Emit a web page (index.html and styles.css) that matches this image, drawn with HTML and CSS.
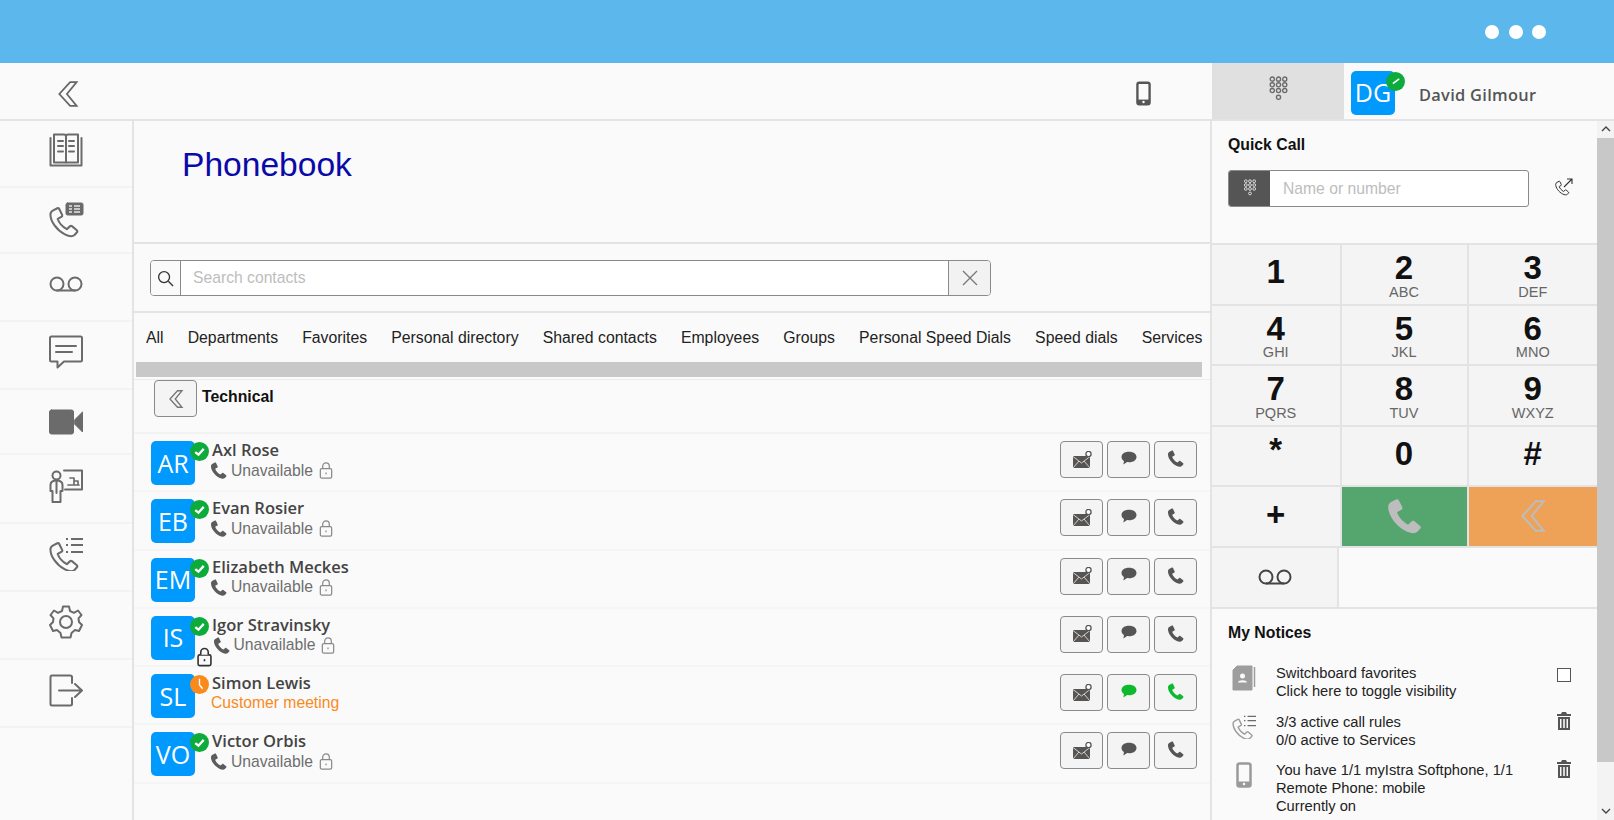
FILE: index.html
```html
<!DOCTYPE html>
<html lang="en">
<head>
<meta charset="utf-8">
<title>Phonebook</title>
<link rel="stylesheet" href="styles.css">
</head>
<body>
<svg class="defs" aria-hidden="true">
  <symbol id="handset" viewBox="0 0 24 24"><path d="M4.500 3.500 7.500 2C8 1.800 8.600 2 8.900 2.500L11 6.800C11.200 7.300 11.100 7.800 10.700 8.100L7.800 9.800C8.800 12.800 11.200 15.400 14.400 17.200L16.800 15C17.200 14.700 17.700 14.700 18.100 15L21.700 18C22.200 18.400 22.200 19 21.800 19.500L20 21.500C18.500 22.700 16 22.500 13 21 7 18 2.500 11.500 2.500 6.500 2.500 5.200 3.300 4.100 4.500 3.500Z"/></symbol>
  <symbol id="chevron" viewBox="0 0 24 24"><path d="M14 1 4 12 14 23H20L11 12 20 1Z"/></symbol>
  <symbol id="voicemail" viewBox="0 0 34 16"><circle cx="8" cy="8" r="6.500"/><circle cx="26" cy="8" r="6.500"/><path d="M8 14.500H26"/></symbol>
  <symbol id="lock" viewBox="0 0 14 18"><rect x="1" y="7" width="12" height="10" rx="1.500"/><path d="M3.500 7V4.500a3.500 3.500 0 0 1 7 0V7"/><path d="M7 11v2"/></symbol>
  <symbol id="mail" viewBox="0 0 20 18"><path class="fill" d="M1 5H18V17H1Z"/><path class="cut" d="M1 5.500 9.500 12 18 5.500M1 17 7 10M18 17 12 10"/><circle class="ring" cx="16.500" cy="3" r="2.600"/></symbol>
  <symbol id="chat" viewBox="0 0 24 20"><path d="M12 1C6 1 2 4 2 8c0 2.300 1.300 4.200 3.300 5.400L4.500 18l5-3.200c.8.100 1.600.200 2.500.200 6 0 10-3 10-7s-4-7-10-7Z"/></symbol>
  <symbol id="pad" viewBox="0 0 20 24"><g fill="none" stroke="currentColor" stroke-width="1.300"><circle cx="4" cy="3" r="2"/><circle cx="10" cy="3" r="2"/><circle cx="16" cy="3" r="2"/><circle cx="4" cy="8.500" r="2"/><circle cx="10" cy="8.500" r="2"/><circle cx="16" cy="8.500" r="2"/><circle cx="4" cy="14" r="2"/><circle cx="10" cy="14" r="2"/><circle cx="16" cy="14" r="2"/><circle cx="10" cy="20.500" r="2"/></g></symbol>
  <symbol id="device" viewBox="0 0 16 26"><rect x="1.500" y="1.500" width="13" height="23" rx="2" fill="none" stroke="currentColor" stroke-width="2.500"/><rect x="1.500" y="19.500" width="13" height="5" fill="currentColor"/><circle cx="8" cy="22" r="1.300" fill="#fafafa"/></symbol>
  <symbol id="trash" viewBox="0 0 14 18"><path fill="currentColor" d="M5 0h4l1 2h4v2H0V2h4ZM1 5h12v13H1Zm2 2v9h1.500V7Zm3.200 0v9h1.600V7Zm3.300 0v9H11V7Z" fill-rule="evenodd"/></symbol>
  <symbol id="calllist" viewBox="0 0 34 34"><use class="hs" href="#handset" x="-2" y="3.500" width="33" height="33"/><path class="lines" d="M17 2h2M22 2H34M17 8h2M22 8H34M17 15h2M22 15H34"/></symbol>
  <symbol id="tick" viewBox="0 0 18 18"><path d="M5 9.500 8 12 13 6.500" fill="none" stroke="#fff" stroke-width="2.200"/></symbol>
  <symbol id="tick-thin" viewBox="0 0 18 18"><path d="M6.500 11 12.500 6.500" fill="none" stroke="#fff" stroke-width="1.600"/></symbol>
</svg>

<div class="app">
  <div class="topbar">
    <span class="dot"></span><span class="dot"></span><span class="dot"></span>
  </div>

  <header class="header">
    <svg class="ico-out back-ico"><use href="#chevron"/></svg>
    <svg class="mobile-ico"><use href="#device"/></svg>
    <div class="pad-tab"><svg class="pad-ico"><use href="#pad"/></svg></div>
    <div class="me">
      <div class="avatar me-avatar">DG<svg class="badge me-badge"><use href="#tick-thin"/></svg></div>
      <span class="me-name">David Gilmour</span>
    </div>
  </header>

  <div class="body">
    <nav class="sidebar">
      <a class="nav-item first">
        <svg class="nav-ico" viewBox="0 0 34 34"><path d="M5 2V29.500H29V2"/><path d="M1.500 5V32.500H32.500V5"/><path d="M5 1.500H15C16 1.500 17 2.500 17 3.500V29.500M29 1.500H19C18 1.500 17 2.500 17 3.500"/><path d="M9 8h5M9 13h5M9 18.500h5M20 8h5M20 13h5M20 18.500h5" stroke-width="2"/></svg>
      </a>
      <a class="nav-item short">
        <svg class="nav-ico" viewBox="0 0 34 34"><use class="hs" href="#handset" x="-2" y="5.500" width="33" height="33"/><rect class="solid" x="17" y="3" width="17" height="12" rx="1.500"/><path class="paper" d="M20 6h3M20 9h3M20 12h3M25 6h6M25 9h6M25 12h6"/></svg>
      </a>
      <a class="nav-item">
        <svg class="nav-ico" viewBox="0 0 34 34"><circle cx="8" cy="17" r="6.500"/><circle cx="26" cy="17" r="6.500"/><path d="M8 23.500H26"/></svg>
      </a>
      <a class="nav-item">
        <svg class="nav-ico" viewBox="0 0 34 34"><path d="M2.500 1.500H31.500C32.300 1.500 33 2.200 33 3V25C33 25.800 32.300 26.500 31.500 26.500H15L8.500 32.500V26.500H2.500C1.700 26.500 1 25.800 1 25V3C1 2.200 1.700 1.500 2.500 1.500Z"/><path d="M7 11H27M7 17H23"/></svg>
      </a>
      <a class="nav-item short">
        <svg class="nav-ico" viewBox="0 0 34 34"><rect class="solid" x="0.500" y="8" width="24" height="24" rx="2"/><path class="solid" d="M25.500 18 33.500 10V30L25.500 22Z"/></svg>
      </a>
      <a class="nav-item">
        <svg class="nav-ico" viewBox="0 0 34 34"><circle cx="7.500" cy="6.500" r="4"/><path d="M1.500 22V16C1.500 13 4 11.500 7.500 11.500S13.500 13 13.500 16V22H11.500V33H3.500V22Z"/><path d="M7.500 11.500V24"/><path d="M15 1.500H33V20.500H16"/><path d="M19 16H30M21 9H25V16M25 12H29V16" stroke-width="1.700"/></svg>
      </a>
      <a class="nav-item">
        <svg class="nav-ico" viewBox="0 0 34 34"><use href="#calllist"/></svg>
      </a>
      <a class="nav-item">
        <svg class="nav-ico" viewBox="0 0 34 34"><circle cx="17" cy="17" r="6"/><path d="M14 1.500H20L21 6 25 7.800 29 5.500 32.500 10 29.500 13.300 30 17 33 20 30 26 26 25 22.500 28 21.500 32.500H12.500L11.500 28 8 25 4 26 1 20 4 17 4.500 13.300 1.500 10 5 5.500 9 7.800 13 6Z"/></svg>
      </a>
      <a class="nav-item">
        <svg class="nav-ico" viewBox="0 0 34 34"><path d="M23 9V3C23 2 22 1.500 21 1.500H3C2 1.500 1.500 2 1.500 3V30C1.500 31 2 31.500 3 31.500H21C22 31.500 23 31 23 30V24"/><path d="M10 16.500H32.500M26 10 33 16.500 26 23"/></svg>
      </a>
    </nav>

    <main class="main">
      <section class="title-sec"><h1 class="title">Phonebook</h1></section>

      <section class="search-sec">
        <div class="search">
          <span class="search-ico-cell">
            <svg class="search-ico" viewBox="0 0 18 18"><circle cx="7.500" cy="7.500" r="5.800"/><path d="M12 12 17 17"/></svg>
          </span>
          <span class="search-input">Search contacts</span>
          <span class="search-clear">
            <svg class="clear-ico" viewBox="0 0 16 16"><path d="M1 1 15 15M15 1 1 15"/></svg>
          </span>
        </div>
      </section>

      <div class="tabs">
        <span>All</span><span>Departments</span><span>Favorites</span><span>Personal directory</span><span>Shared contacts</span><span>Employees</span><span>Groups</span><span>Personal Speed Dials</span><span>Speed dials</span><span>Services</span>
      </div>
      <div class="hscroll"><div class="hthumb"></div></div>

      <div class="crumb">
        <button class="crumb-btn"><svg class="ico-out crumb-ico"><use href="#chevron"/></svg></button>
        <strong class="crumb-text">Technical</strong>
      </div>

      <div class="contact">
        <div class="avatar">AR<svg class="badge"><use href="#tick"/></svg></div>
        <div class="info"><div class="name">Axl Rose</div><div class="sub"><svg class="sub-phone"><use href="#handset"/></svg><span>Unavailable</span><svg class="sub-lock"><use href="#lock"/></svg></div></div>
        <div class="actions"><button class="act"><svg class="i-mail"><use href="#mail"/></svg></button><button class="act"><svg class="i-chat"><use href="#chat"/></svg></button><button class="act"><svg class="i-call"><use href="#handset"/></svg></button></div>
      </div>
      <div class="contact">
        <div class="avatar">EB<svg class="badge"><use href="#tick"/></svg></div>
        <div class="info"><div class="name">Evan Rosier</div><div class="sub"><svg class="sub-phone"><use href="#handset"/></svg><span>Unavailable</span><svg class="sub-lock"><use href="#lock"/></svg></div></div>
        <div class="actions"><button class="act"><svg class="i-mail"><use href="#mail"/></svg></button><button class="act"><svg class="i-chat"><use href="#chat"/></svg></button><button class="act"><svg class="i-call"><use href="#handset"/></svg></button></div>
      </div>
      <div class="contact">
        <div class="avatar">EM<svg class="badge"><use href="#tick"/></svg></div>
        <div class="info"><div class="name">Elizabeth Meckes</div><div class="sub"><svg class="sub-phone"><use href="#handset"/></svg><span>Unavailable</span><svg class="sub-lock"><use href="#lock"/></svg></div></div>
        <div class="actions"><button class="act"><svg class="i-mail"><use href="#mail"/></svg></button><button class="act"><svg class="i-chat"><use href="#chat"/></svg></button><button class="act"><svg class="i-call"><use href="#handset"/></svg></button></div>
      </div>
      <div class="contact">
        <div class="avatar">IS<svg class="badge"><use href="#tick"/></svg><svg class="dark-lock"><use href="#lock"/></svg></div>
        <div class="info"><div class="name">Igor Stravinsky</div><div class="sub shifted"><svg class="sub-phone"><use href="#handset"/></svg><span>Unavailable</span><svg class="sub-lock"><use href="#lock"/></svg></div></div>
        <div class="actions"><button class="act"><svg class="i-mail"><use href="#mail"/></svg></button><button class="act"><svg class="i-chat"><use href="#chat"/></svg></button><button class="act"><svg class="i-call"><use href="#handset"/></svg></button></div>
      </div>
      <div class="contact">
        <div class="avatar">SL<svg class="badge busy" viewBox="0 0 18 18"><path d="M9 3.500V9.500L12 13" fill="none" stroke="#fff" stroke-width="1.300"/></svg></div>
        <div class="info"><div class="name">Simon Lewis</div><div class="sub meeting"><span>Customer meeting</span></div></div>
        <div class="actions"><button class="act"><svg class="i-mail"><use href="#mail"/></svg></button><button class="act"><svg class="i-chat live"><use href="#chat"/></svg></button><button class="act"><svg class="i-call live"><use href="#handset"/></svg></button></div>
      </div>
      <div class="contact">
        <div class="avatar">VO<svg class="badge"><use href="#tick"/></svg></div>
        <div class="info"><div class="name">Victor Orbis</div><div class="sub"><svg class="sub-phone"><use href="#handset"/></svg><span>Unavailable</span><svg class="sub-lock"><use href="#lock"/></svg></div></div>
        <div class="actions"><button class="act"><svg class="i-mail"><use href="#mail"/></svg></button><button class="act"><svg class="i-chat"><use href="#chat"/></svg></button><button class="act"><svg class="i-call"><use href="#handset"/></svg></button></div>
      </div>
    </main>

    <aside class="right">
      <div class="right-scroll">
        <section class="quick">
          <h2 class="sec-title">Quick Call</h2>
          <div class="quick-row">
            <div class="quick-input">
              <span class="quick-pad"><svg class="quick-pad-ico"><use href="#pad"/></svg></span>
              <span class="quick-ph">Name or number</span>
            </div>
            <svg class="quick-call" viewBox="0 0 18 18"><use class="qc-hs" href="#handset" x="-1" y="2" width="16" height="16"/><path d="M9 9 17 1M12 1H17V6"/></svg>
          </div>
        </section>

        <section class="keypad">
          <button class="key solo"><b>1</b></button>
          <button class="key"><b>2</b><small>ABC</small></button>
          <button class="key"><b>3</b><small>DEF</small></button>
          <button class="key"><b>4</b><small>GHI</small></button>
          <button class="key"><b>5</b><small>JKL</small></button>
          <button class="key"><b>6</b><small>MNO</small></button>
          <button class="key"><b>7</b><small>PQRS</small></button>
          <button class="key"><b>8</b><small>TUV</small></button>
          <button class="key"><b>9</b><small>WXYZ</small></button>
          <button class="key star"><b>*</b></button>
          <button class="key solo"><b>0</b></button>
          <button class="key solo"><b>#</b></button>
          <button class="key plus"><b>+</b></button>
          <button class="key call"><svg class="call-ico"><use href="#handset"/></svg></button>
          <button class="key erase"><svg class="erase-ico"><use href="#chevron"/></svg></button>
          <button class="key vm"><svg class="vm-ico"><use href="#voicemail"/></svg></button>
        </section>

        <section class="notices">
          <h2 class="sec-title">My Notices</h2>
          <div class="notice">
            <svg class="n-ico" viewBox="0 0 24 26"><path class="solid-n" d="M5 1H20V25H1V5Z"/><path d="M22.500 2V22" class="line-n"/><circle cx="10.500" cy="11" r="2.500" fill="#fafafa"/><path d="M6 17.500C6 14.500 15 14.500 15 17.500Z" fill="#fafafa"/></svg>
            <p class="n-text">Switchboard favorites<br>Click here to toggle visibility</p>
            <span class="n-check"></span>
          </div>
          <div class="notice">
            <svg class="n-ico light" viewBox="0 0 34 34"><use href="#calllist"/></svg>
            <p class="n-text">3/3 active call rules<br>0/0 active to Services</p>
            <svg class="n-trash"><use href="#trash"/></svg>
          </div>
          <div class="notice">
            <svg class="n-device"><use href="#device"/></svg>
            <p class="n-text">You have 1/1 myIstra Softphone, 1/1 Remote Phone: mobile<br>Currently on</p>
            <svg class="n-trash"><use href="#trash"/></svg>
          </div>
        </section>
      </div>
      <div class="vscroll">
        <svg class="arrow" viewBox="0 0 10 6"><path d="M1 5 5 1 9 5"/></svg>
        <div class="vthumb"></div>
        <svg class="arrow" viewBox="0 0 10 6"><path d="M1 1 5 5 9 1"/></svg>
      </div>
    </aside>
  </div>
</div>
</body>
</html>
```
FILE: styles.css
```css
* { box-sizing: border-box; }
html, body { margin: 0; padding: 0; height: 100%; overflow: hidden; }
body { font-family: "Liberation Sans", Arial, sans-serif; background: #fafafa; color: #222; }
.defs { width: 0; height: 0; position: absolute; }
button { font: inherit; padding: 0; margin: 0; }

.app { display: flex; flex-direction: column; height: 820px; width: 1614px; }

.topbar { height: 63px; background: #5cb8ec; display: flex; align-items: center; justify-content: flex-end; gap: 9.500px; padding: 0 68px 0 0; flex: none; }
.dot { width: 14px; height: 14px; border-radius: 50%; background: #fff; }

.header { height: 58px; flex: none; display: flex; align-items: center; border-bottom: 2px solid #e3e3e3; background: #fafafa; }
.ico-out { fill: none; stroke: #666; stroke-width: 1.600; }
.back-ico { width: 26px; height: 26px; margin: 6px 0 0 55px; flex: none; }
.mobile-ico { width: 15px; height: 25px; margin: 4px 0 0 1055px; color: #555; flex: none; }
.pad-tab { width: 132px; height: 56px; margin-left: 61px; background: #e0e0e0; display: flex; align-items: center; justify-content: center; flex: none; }
.pad-ico { width: 21px; height: 25px; color: #6a6a6a; margin-bottom: 5px; }
.me { display: flex; align-items: center; padding-left: 7px; }
.avatar { position: relative; width: 44px; height: 44px; border-radius: 5px; background: #0099fe; color: #fff; font-family: "Open Sans", sans-serif; font-size: 25px; padding-bottom: 1px; display: flex; align-items: center; justify-content: center; flex: none; }
.me-avatar { margin-top: 3px; }
.me-name { margin-left: 24px; font-family: "Open Sans", sans-serif; font-weight: 600; font-size: 16.400px; letter-spacing: .3px; color: #555; margin-top: 6px; }
.badge { position: absolute; width: 19px; height: 19px; top: 1px; left: 39px; border-radius: 50%; background: #0dab3c; }
.me-badge { top: 1px; left: 35px; }
.busy { background: #f98a1c; }
.dark-lock { position: absolute; left: 46px; top: 31px; width: 15px; height: 20px; fill: #fafafa; stroke: #333; stroke-width: 1.500; }

.body { display: flex; flex: 1; min-height: 0; }

.sidebar { width: 134px; flex: none; border-right: 2px solid #e3e3e3; display: flex; flex-direction: column; }
.nav-item { height: 68.200px; flex: none; border-bottom: 2px solid #f3f3f3; display: flex; align-items: center; padding: 0 0 5px 49px; }
.nav-item.first { height: 67px; padding-bottom: 7px; }
.nav-item.short { height: 65.500px; }
.nav-ico { width: 34px; height: 34px; fill: none; stroke: #6b6b6b; stroke-width: 2; stroke-linejoin: round; stroke-linecap: round; overflow: visible; }
.hs { stroke-width: 1.500; }
.solid { fill: #6b6b6b; stroke: #6b6b6b; stroke-width: 1; }
.paper { stroke: #e8e8e8; stroke-width: 1.300; stroke-linecap: butt; }
.lines { stroke-width: 2; stroke-linecap: butt; fill: none; stroke: #6b6b6b; }

.main { width: 1076px; flex: none; display: flex; flex-direction: column; min-height: 0; }
.title-sec { height: 123px; flex: none; border-bottom: 2px solid #e3e3e3; padding: 25px 0 0 48px; }
.title { margin: 0; font-weight: 400; font-size: 33.600px; line-height: 38px; color: #0a0aa8; }
.search-sec { height: 69px; flex: none; border-bottom: 2px solid #e3e3e3; padding: 16px 0 0 16px; }
.search { display: flex; width: 841px; height: 36px; border: 1.500px solid #8a8a8a; border-radius: 4px; overflow: hidden; background: #fff; }
.search-ico-cell { width: 30px; display: flex; align-items: center; justify-content: center; border-right: 1.500px solid #8a8a8a; background: #fafafa; flex: none; }
.search-ico { width: 17px; height: 17px; fill: none; stroke: #333; stroke-width: 1.400; }
.search-input { flex: 1; padding-left: 12px; line-height: 34px; font-size: 15.700px; color: #bdbdbd; }
.search-clear { width: 42px; border-left: 1.500px solid #8a8a8a; background: #f2f2f2; display: flex; align-items: center; justify-content: center; flex: none; }
.clear-ico { width: 16px; height: 16px; fill: none; stroke: #777; stroke-width: 1.300; }

.tabs { height: 49px; flex: none; display: flex; align-items: center; gap: 24.100px; padding: 0 0 0 12px; font-size: 15.800px; color: #222; white-space: nowrap; overflow: hidden; }
.hscroll { height: 18px; flex: none; padding: 0 8px 2px 2px; border-bottom: 1px solid #ececec; }
.hthumb { height: 15px; background: #c8c8c8; }

.crumb { height: 54px; flex: none; display: flex; align-items: flex-start; padding: 0 0 0 20px; border-bottom: 2px solid #f3f3f3; }
.crumb-btn { width: 43px; height: 37px; background: #f4f4f4; border: 1.500px solid #8a8a8a; border-radius: 4px; display: flex; align-items: center; justify-content: center; }
.crumb-ico { width: 18px; height: 18px; stroke: #777; stroke-width: 1.800; }
.crumb-text { margin: 8px 0 0 5px; font-size: 15.800px; color: #111; }

.contact { height: 58.300px; flex: none; display: flex; align-items: flex-start; padding: 7px 13px 0 17px; border-bottom: 2px solid #f5f5f5; }
.info { margin-left: 16px; margin-top: -2px; flex: 1; }
.name { font-family: "Open Sans", sans-serif; font-weight: 600; font-size: 16.500px; line-height: 22px; color: #444; margin-left: 1px; }
.sub { display: flex; align-items: center; height: 20px; font-size: 15.700px; color: #6e6e6e; margin-top: -0.500px; }
.sub.shifted { margin-left: 2.500px; }
.sub-phone { width: 19px; height: 19px; fill: #5c5c5c; margin-right: 3px; margin-left: -2px; }
.sub-lock { width: 14px; height: 17px; margin-left: 6px; fill: none; stroke: #8a8a8a; stroke-width: 1.300; }
.meeting { color: #f98a1c; margin-left: 0; margin-top: -1.500px; }
.actions { display: flex; gap: 4px; }
.act { width: 43px; height: 37px; background: #f4f4f4; border: 1.500px solid #8a8a8a; border-radius: 4px; display: flex; align-items: center; justify-content: center; }
.i-mail { width: 20px; height: 18px; }
.fill { fill: #555; }
.cut { fill: none; stroke: #d8cfc8; stroke-width: 1; }
.ring { fill: #fff; stroke: #555; stroke-width: 1.300; }
.i-chat { width: 18px; height: 15px; fill: #555; margin-bottom: 3px; }
.i-call { width: 19px; height: 19px; fill: #555; margin-bottom: 2px; }
.live { fill: #0dba2e; }

.right { flex: 1; display: flex; min-width: 0; border-left: 2px solid #e3e3e3; }
.right-scroll { width: 385px; flex: none; overflow: hidden; }
.sec-title { margin: 0; font-size: 15.800px; font-weight: 700; color: #111; line-height: 20px; }
.quick { height: 122px; padding: 14px 0 0 16px; }
.quick-row { display: flex; align-items: flex-start; margin-top: 15px; }
.quick-input { width: 301px; height: 37px; border: 1.500px solid #8a8a8a; border-radius: 3px; background: #fff; display: flex; overflow: hidden; }
.quick-pad { width: 41px; background: #555; display: flex; align-items: center; justify-content: center; flex: none; }
.quick-pad-ico { width: 14px; height: 17px; color: #e6e6e6; margin-bottom: 3px; }
.quick-ph { padding-left: 13px; line-height: 35px; font-size: 15.700px; color: #bdbdbd; }
.quick-call { width: 18px; height: 18px; margin: 8px 0 0 26px; fill: none; stroke: #333; stroke-width: 1.100; overflow: visible; }
.qc-hs { stroke-width: 1.500; }

.keypad { display: grid; grid-template-columns: 129.500px 127px 128.500px; grid-auto-rows: 60.500px; border-top: 2px solid #e3e3e3; }
.key { background: #f4f4f4; border: 0; border-right: 2px solid #e3e3e3; border-bottom: 2px solid #e3e3e3; display: flex; flex-direction: column; align-items: center; justify-content: flex-start; color: #111; }
.key:nth-child(3n) { border-right: 0; }
.key b { font-size: 33px; line-height: 36px; margin-top: 5px; font-weight: 700; }
.key small { font-size: 14.500px; line-height: 16px; color: #666; margin-top: -2.500px; }
.key.solo b { margin-top: 9px; }
.key.star b { margin-top: 5px; }
.key.plus b { margin-top: 10px; }
.call { background: #55a56f; align-items: center; justify-content: center; }
.erase { background: #eda257; justify-content: center; }
.call-ico { width: 40px; height: 40px; fill: #bdbdbd; }
.erase-ico { width: 32px; height: 34px; fill: none; stroke: #bdbdbd; stroke-width: 1.500; }
.vm { justify-content: center; height: 61px; width: 127px; }
.vm-ico { width: 34px; height: 16px; fill: none; stroke: #444; stroke-width: 2; }

.notices { border-top: 2px solid #e3e3e3; padding: 14px 0 0 16px; margin-top: -1px; }
.notice { display: flex; align-items: flex-start; margin-bottom: 12.500px; }
.notices .sec-title { margin-bottom: 21px; }
.n-ico { width: 24px; height: 26px; flex: none; margin: 1px 0 0 4px; fill: none; overflow: visible; }
.solid-n { fill: #9d9d9d; stroke: #9d9d9d; stroke-linejoin: round; }
.line-n { fill: none; stroke: #9d9d9d; stroke-width: 1.500; }
.n-ico.light { stroke: #9d9d9d; stroke-width: 1.500; color: #9d9d9d; }
.n-ico.light .lines { stroke: #9d9d9d; }
.n-device { width: 16px; height: 26px; color: #9a9a9a; margin: 1px 4px 0 8px; flex: none; }
.n-text { margin: 0 0 0 20px; width: 246px; font-size: 14.700px; line-height: 18px; color: #222; }
.n-check { width: 14px; height: 14px; border: 1.500px solid #555; margin: 4px 0 0 35px; background: #fff; flex: none; }
.n-trash { width: 14px; height: 18px; color: #555; margin: -1px 0 0 35px; flex: none; }

.vscroll { flex: 1; background: #f3f3f3; display: flex; flex-direction: column; align-items: center; }
.vthumb { width: 100%; height: 624px; background: #c8c8c8; margin-bottom: auto; }
.arrow { width: 10px; height: 6px; fill: none; stroke: #444; stroke-width: 1.400; flex: none; margin: 5px 0 6px; }
```
